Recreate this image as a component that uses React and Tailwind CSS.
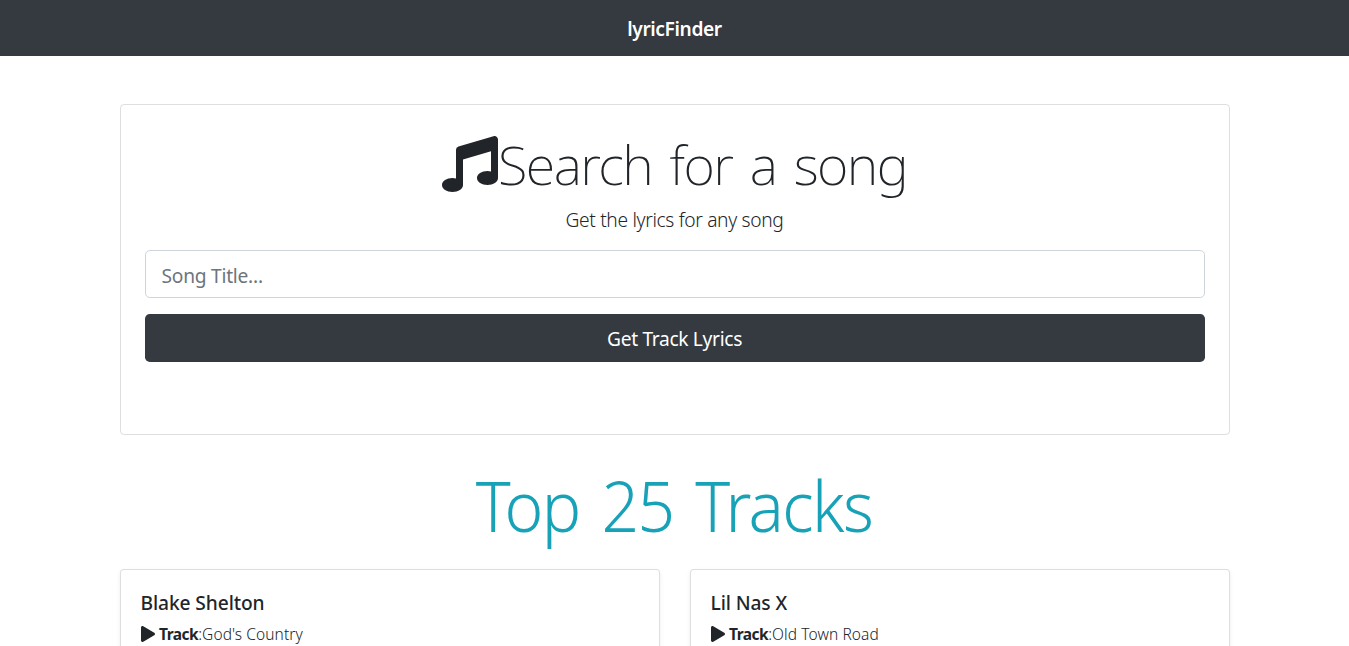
import { FaMusic, FaPlay } from "react-icons/fa";

const tracks = [
  { artist: "Blake Shelton", track: "God's Country" },
  { artist: "Lil Nas X", track: "Old Town Road" },
];

function TrackCard({ artist, track }) {
  return (
    <article className="h-[220px] rounded border border-black/[0.125] bg-white p-5 shadow-[0_2px_4px_rgba(0,0,0,0.075)]">
      <h5 className="mb-[7px] pt-px text-[19.2px] font-medium leading-6 tracking-[-0.1px]">
        {artist}
      </h5>
      <p className="flex items-center whitespace-nowrap text-[15.5px] leading-6">
        <FaPlay className="mr-[4.5px] h-4 w-3.5 shrink-0" />
        <strong className="font-bold tracking-[-0.5px]">Track</strong>
        <span className="font-light tracking-[0.1px]">:{track}</span>
      </p>
    </article>
  );
}

export default function App() {
  return (
    <div className="h-screen overflow-hidden bg-white font-['Noto_Sans',sans-serif] text-[#212529]">
      <nav className="flex h-14 items-center justify-center bg-[#343a40] pt-0.5 text-white">
        <span className="text-[19.2px] font-semibold leading-[30px] tracking-[-0.4px]">lyricFinder</span>
      </nav>
      <main className="mx-auto mt-12 w-[1110px]">
        <section className="h-[331px] rounded border border-black/[0.125] p-6">
          <h1 className="mb-2 flex h-[67px] items-center justify-center whitespace-nowrap pt-0.5 font-[250] leading-[67px]">
            <FaMusic className="h-14 w-14 shrink-0" />
            <span className="mt-0.5 text-[54px] tracking-[-1.6px] [word-spacing:5px]">
              Search for a song
            </span>
          </h1>
          <p className="mb-[15px] pt-px text-center text-[19.2px] font-light leading-[30px] tracking-[-0.33px]">
            Get the lyrics for any song
          </p>
          <input
            type="text"
            placeholder="Song Title..."
            className="mb-4 block h-12 w-full rounded-[4.8px] border border-[#ced4da] px-4 pt-0.5 text-[19.2px] leading-[30px] tracking-[-0.25px] placeholder:text-[#6c757d]"
          />
          <button className="block h-12 w-full rounded-[4.8px] bg-[#343a40] pt-0.5 text-[19.2px] leading-[30px] tracking-[-0.33px] text-white">
            Get Track Lyrics
          </button>
        </section>
        <h2 className="mb-[21px] mt-[27px] text-center text-[70px] font-light leading-[86.4px] tracking-[-1.6px] text-[#17a2b8]">
          <span className="inline-block scale-x-[0.94] [word-spacing:6.5px]">Top 25 Tracks</span>
        </h2>
        <div className="grid grid-cols-2 gap-[30px]">
          {tracks.map((item) => (
            <TrackCard key={item.artist} {...item} />
          ))}
        </div>
      </main>
    </div>
  );
}
